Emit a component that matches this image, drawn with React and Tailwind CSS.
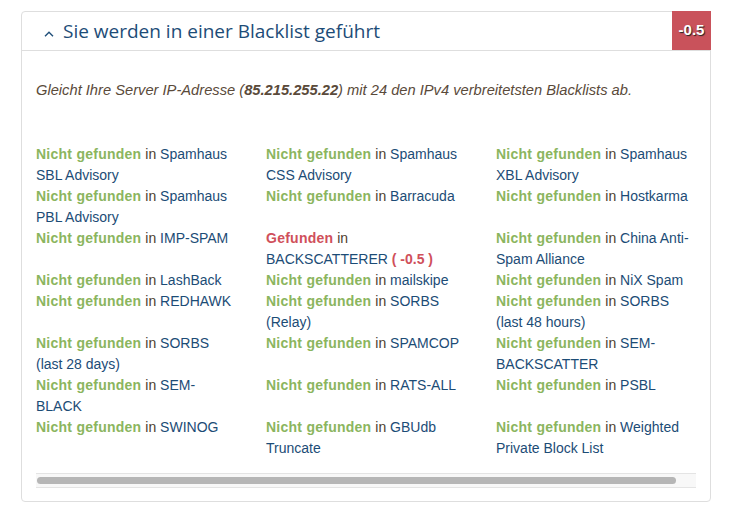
import React from "react";

const lists = [
  { name: ["Spamhaus", "SBL Advisory"] },
  { name: ["Spamhaus", "CSS Advisory"] },
  { name: ["Spamhaus", "XBL Advisory"] },
  { name: ["Spamhaus", "PBL Advisory"] },
  { name: ["Barracuda"] },
  { name: ["Hostkarma"] },
  { name: ["IMP-SPAM"] },
  { name: ["BACKSCATTERER"], found: true, score: "-0.5" },
  { name: ["China Anti-", "Spam Alliance"] },
  { name: ["LashBack"] },
  { name: ["mailskipe"] },
  { name: ["NiX Spam"] },
  { name: ["REDHAWK"] },
  { name: ["SORBS", "(Relay)"] },
  { name: ["SORBS", "(last 48 hours)"] },
  { name: ["SORBS", "(last 28 days)"] },
  { name: ["SPAMCOP"] },
  { name: ["SEM-", "BACKSCATTER"] },
  { name: ["SEM-", "BLACK"] },
  { name: ["RATS-ALL"] },
  { name: ["PSBL"] },
  { name: ["SWINOG"] },
  { name: ["GBUdb", "Truncate"] },
  { name: ["Weighted", "Private Block List"] },
];

function ListItem({ item }) {
  if (item.found) {
    return (
      <div className="whitespace-nowrap">
        <span className="font-bold tracking-[0.25px] text-[#d0505b]">Gefunden</span>
        <span className="text-[#4d3d2e]"> in</span>
        <br />
        <span className="text-[#1c4c76]">{item.name[0]}</span>{" "}
        <span className="font-bold text-[#d0505b]">( {item.score} )</span>
      </div>
    );
  }
  return (
    <div className="whitespace-nowrap">
      <span className="font-bold tracking-[0.25px] text-[#8bb55e]">Nicht gefunden</span>
      <span className="text-[#4d3d2e]"> in </span>
      {item.name.map((line, i) => (
        <React.Fragment key={i}>
          {i > 0 && <br />}
          <span className="text-[#1c4c76]">{line}</span>
        </React.Fragment>
      ))}
    </div>
  );
}

export default function App() {
  return (
    <div className="min-h-[510px] bg-white pl-[21px] pt-[11px] font-['Liberation_Sans',Arial,sans-serif]">
      <div className="w-[690px] rounded-[4px] border border-[#dedede]">
        {/* Header */}
        <div className="flex h-[39px] items-stretch justify-between border-b border-[#dedede]">
          <div className="flex items-center pl-[22px]">
            <svg width="10" height="6" viewBox="0 0 10 6" className="mt-[5px]">
              <path d="M1 5.2 L5 1.2 L9 5.2" fill="none" stroke="#1e4e79" strokeWidth="1.4" />
            </svg>
            <h2 className="ml-[9px] font-['Open_Sans',sans-serif] text-[19px] font-medium text-[#1d4c77]">
              Sie werden in einer Blacklist geführt
            </h2>
          </div>
          <div className="-mt-px -mr-px flex w-[39px] items-center justify-center bg-[#c9525b] text-[15px] font-bold text-white [text-shadow:1px_1px_1px_#222]">
            -0.5
          </div>
        </div>

        {/* Body */}
        <div className="px-[14px] pt-[29px] pb-[13px] text-[14px] leading-[21px]">
          <p className="text-[14.7px] italic text-[#5a4a3a]">
            Gleicht Ihre Server IP-Adresse (<b>85.215.255.22</b>) mit 24 den IPv4 verbreitetsten Blacklists ab.
          </p>

          <div className="mt-[43px] w-[660px] overflow-hidden">
            <div className="grid w-[690px] grid-cols-[230px_230px_230px] pb-[14px]">
              {lists.map((item, i) => (
                <ListItem key={i} item={item} />
              ))}
            </div>
          </div>

          {/* horizontal scrollbar */}
          <div className="h-[15px] w-[660px] border-y border-[#e4e4e4] bg-[#f8f8f8] pt-[3px] pl-[1px]">
            <div className="h-[7px] w-[639px] rounded-full bg-[#b6b6b6]" />
          </div>
        </div>
      </div>
    </div>
  );
}
